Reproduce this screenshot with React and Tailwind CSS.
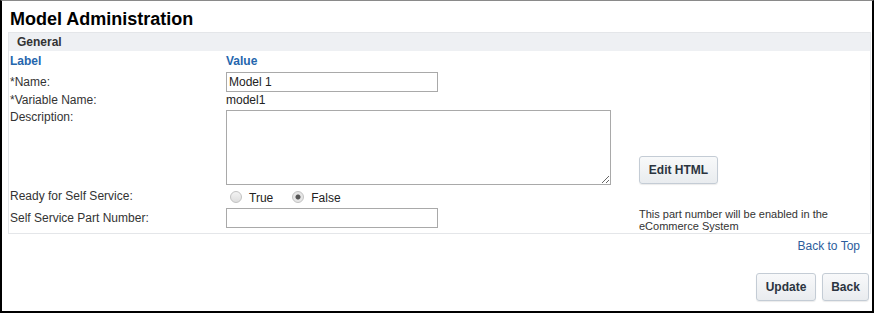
import React, { useState } from 'react';

const btn = "h-[28px] px-[6px] whitespace-nowrap rounded-[3px] border border-[#c4ccd5] bg-gradient-to-b from-[#f8f9fa] to-[#e9ecef] text-[12px] font-bold text-[#2b3440] shadow-[0_1px_1px_rgba(0,0,0,0.08)]";
const radio = "appearance-none w-[12px] h-[12px] m-0 rounded-full border border-[#c2c2c2] bg-[linear-gradient(#f3f3f3,#dedede)] checked:bg-[radial-gradient(circle,#555_0,#555_2px,#e6e6e6_3px)]";

export default function App() {
    const [name, setName] = useState('Model 1');
    const [ready, setReady] = useState('false');

    return (
        <div className="w-[874px] h-[313px] border-l-2 border-r-2 border-b-2 border-t border-black border-t-[#8a8a8a] bg-white text-[#333] text-[12px] font-['Liberation_Sans',Arial,sans-serif] flex flex-col">
            <h1 className="pl-[8px] pt-[7px] h-[31px] text-[18px] leading-[22px] font-bold text-black">Model Administration</h1>

            <div className="ml-[6px] mr-[1px] border border-[#e4e6e9] h-[202px]">
                <div className="h-[18px] bg-[#eef0f3] pl-[8px] text-[12px] leading-[18px] font-bold text-[#333]">General</div>

                <div className="grid grid-cols-[216px_413px_1fr] pl-[1px] items-center">
                    <div className="h-[20px] pt-[2px] font-bold text-[#2566ad] leading-[16px]">Label</div>
                    <div className="h-[20px] pt-[2px] font-bold text-[#2566ad] leading-[16px]">Value</div>
                    <div />

                    <div className="leading-[14px]">*Name:</div>
                    <div className="h-[21px] flex items-center">
                        <input
                            value={name}
                            onChange={e => setName(e.target.value)}
                            className="w-[212px] h-[20px] border border-[#a9a9a9] px-[2px] text-[12px] text-[#222] outline-none"
                        />
                    </div>
                    <div />

                    <div className="h-[16px] leading-[16px]">*Variable Name:</div>
                    <div className="h-[16px] leading-[16px] text-[#222]">model1</div>
                    <div />

                    <div className="self-start pt-[2px] leading-[14px]">Description:</div>
                    <div className="pt-[2px] pb-[2px]">
                        <textarea className="w-[385px] h-[75px] border border-[#a9a9a9] outline-none align-top resize" />
                    </div>
                    <div className="self-end pb-[3px]">
                        <button className={`${btn} w-[79px]`}>Edit HTML</button>
                    </div>

                    <div className="h-[19px] leading-[19px]">Ready for Self Service:</div>
                    <div className="h-[19px] flex items-center gap-[6px] pl-[4px] text-[12px] text-[#222]">
                        <label className="flex items-center gap-[7px]">
                            <input type="radio" name="ready" checked={ready === 'true'} onChange={() => setReady('true')} className={radio} />
                            <span className="pt-[2px]">True</span>
                        </label>
                        <label className="flex items-center gap-[7px] ml-[13px]">
                            <input type="radio" name="ready" checked={ready === 'false'} onChange={() => setReady('false')} className={radio} />
                            <span className="pt-[2px]">False</span>
                        </label>
                    </div>
                    <div />

                    <div className="self-start h-[22px] leading-[24px]">Self Service Part Number:</div>
                    <div className="self-start h-[22px] flex items-center">
                        <input className="mt-[2px] w-[212px] h-[20px] border border-[#a9a9a9] px-[2px] text-[12px] outline-none" />
                    </div>
                    <div className="self-start pt-[2px] text-[11px] leading-[12px] text-[#333]">
                        This part number will be enabled in the<br />eCommerce System
                    </div>
                </div>
            </div>

            <div className="flex justify-end pr-[12px] pt-[5px] h-[31px]">
                <a href="#top" className="text-[12px] text-[#2c5d9c] leading-[14px]">Back to Top</a>
            </div>

            <div className="flex justify-end gap-[6px] pr-[3px] pt-[8px]">
                <button className={`${btn} w-[60px]`}>Update</button>
                <button className={`${btn} w-[47px]`}>Back</button>
            </div>
        </div>
    );
}
